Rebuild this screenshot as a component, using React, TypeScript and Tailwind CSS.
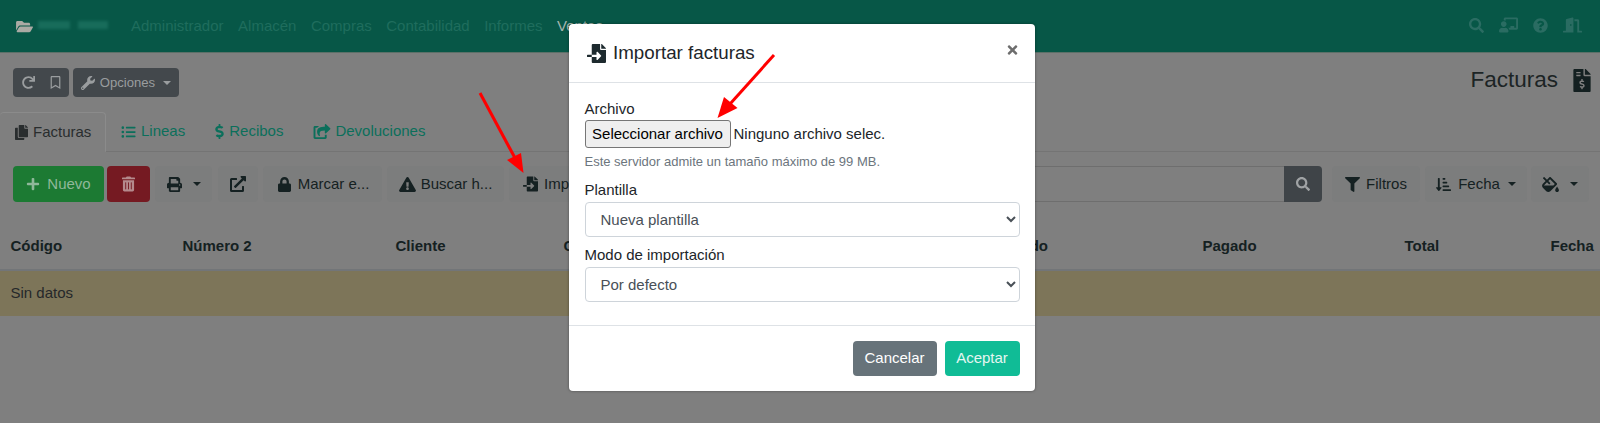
import {
  FaChalkboardTeacher,
  FaCopy,
  FaDollarSign,
  FaDoorOpen,
  FaExclamationTriangle,
  FaExternalLinkAlt,
  FaFileImport,
  FaFileInvoiceDollar,
  FaFillDrip,
  FaFilter,
  FaFolderOpen,
  FaListUl,
  FaLock,
  FaPlus,
  FaPrint,
  FaQuestionCircle,
  FaRedo,
  FaRegBookmark,
  FaSearch,
  FaShareSquare,
  FaSortAmountDownAlt,
  FaTimes,
  FaTrashAlt,
  FaWrench,
} from "react-icons/fa";

const Caret = () => (
  <span className="inline-block border-x-[4px] border-t-[4px] border-x-transparent border-t-current" />
);

const App = () => {
  const navLinks = ["Administrador", "Almacén", "Compras", "Contabilidad", "Informes"];
  const columns = ["Código", "Número 2", "Cliente", "Cif/NIF", "Vencido", "Pagado", "Total", "Fecha"];

  return (
    <div className="relative h-[423px] w-[1600px] overflow-hidden bg-[#7f7f7f] font-['Liberation_Sans',sans-serif] text-[15px] text-[#1f2728]">
      {/* Navbar */}
      <nav className="flex h-[53px] items-center border-b border-[#5c7068] bg-[#075747] pl-[14px] pr-[18px]">
        <FaFolderOpen className="h-[15px] w-[21px] shrink-0 text-[#aaaaa4]" />
        <div className="ml-[3px] flex w-[93px] gap-[8px] pb-[2px] opacity-30 blur-[1.5px]">
          <span className="h-[8px] w-[32px] bg-[#3f9c88]" />
          <span className="h-[8px] w-[30px] bg-[#3f9c88]" />
        </div>
        <div className="flex gap-[14.5px] text-[#1f6d5d]">
          {navLinks.map((link) => (
            <span key={link}>{link}</span>
          ))}
          <span className="text-[#a3b5ae]">Ventas</span>
        </div>
        <div className="ml-auto flex items-center gap-[15px] pb-[2px] text-[#2a6c62]">
          <FaSearch className="h-[15px] w-[15px]" />
          <FaChalkboardTeacher className="h-[16px] w-[19px]" />
          <FaQuestionCircle className="h-[15px] w-[15px]" />
          <FaDoorOpen className="h-[16px] w-[19px]" />
        </div>
      </nav>

      {/* Page actions and title */}
      <div className="mt-[15px] flex h-[29px] items-center pl-[13px] pr-[9px]">
        <div className="flex h-[29px] w-[56px] items-center justify-center gap-[15px] rounded-[4px] bg-[#43484c] text-[#9a9d9f]">
          <FaRedo className="h-[13px] w-[13px]" />
          <FaRegBookmark className="h-[13px] w-[11px]" />
        </div>
        <div className="ml-[4px] flex h-[29px] w-[106px] items-center justify-center gap-[5px] rounded-[4px] bg-[#43484c] text-[13.125px] text-[#9a9d9f]">
          <FaWrench className="h-[14px] w-[14px]" />
          <span className="mr-[3px]">Opciones</span>
          <Caret />
        </div>
        <div className="ml-auto flex items-center gap-[15px] pb-[5px]">
          <span className="text-[22.5px] text-[#1c2425]">Facturas</span>
          <FaFileInvoiceDollar className="h-[23px] w-[18px] text-[#142021]" />
        </div>
      </div>

      {/* Tabs */}
      <div className="mt-[15px] flex h-[40px] border-b border-[#747474] text-[#0b6f5b]">
        <div className="-mb-px flex w-[106px] items-center gap-[5px] rounded-t-[4px] border border-b-[#7f7f7f] border-l-0 border-[#8b8b8b] pl-[15px] text-[#292d2e]">
          <FaCopy className="h-[15px] w-[13px]" />
          <span>Facturas</span>
        </div>
        <div className="ml-[15px] flex items-center gap-[5px]">
          <FaListUl className="h-[14px] w-[15px]" />
          <span>Lineas</span>
        </div>
        <div className="ml-[30px] flex items-center gap-[5px]">
          <FaDollarSign className="h-[15px] w-[9px]" />
          <span>Recibos</span>
        </div>
        <div className="ml-[30px] flex items-center gap-[4px]">
          <FaShareSquare className="h-[15px] w-[18px]" />
          <span>Devoluciones</span>
        </div>
      </div>

      {/* Toolbar */}
      <div className="mt-[14px] flex h-[36px] items-stretch pl-[13px]">
        <div className="flex w-[91px] items-center justify-center gap-[7px] rounded-[4px] bg-[#1c7a33] text-[#8fb89a]">
          <FaPlus className="h-[14px] w-[14px]" />
          <span>Nuevo</span>
        </div>
        <div className="ml-[3px] flex w-[43px] items-center justify-center rounded-[4px] bg-[#751a22] text-[#b58a8d]">
          <FaTrashAlt className="h-[16px] w-[13px]" />
        </div>
        <div className="ml-[5px] flex w-[57px] items-center justify-center gap-[11px] rounded-[4px] bg-[#7c7d7d] text-[#152122]">
          <FaPrint className="h-[15px] w-[15px]" />
          <Caret />
        </div>
        <div className="ml-[6px] flex w-[40px] items-center justify-center rounded-[4px] bg-[#7c7d7d] text-[#152122]">
          <FaExternalLinkAlt className="h-[16px] w-[16px]" />
        </div>
        <div className="ml-[5px] flex w-[119px] items-center justify-center gap-[7px] rounded-[4px] bg-[#7c7d7d] pl-[2px] text-[#152122]">
          <FaLock className="h-[15px] w-[13px]" />
          <span>Marcar e...</span>
        </div>
        <div className="ml-[5px] flex w-[117px] items-center justify-center gap-[5px] rounded-[4px] bg-[#7c7d7d] text-[#152122]">
          <FaExclamationTriangle className="h-[15px] w-[17px]" />
          <span>Buscar h...</span>
        </div>
        <div className="ml-[5px] flex w-[100px] items-center justify-start gap-[6px] rounded-[4px] bg-[#7c7d7d] pl-[14px] text-[#152122]">
          <FaFileImport className="h-[16px] w-[15px]" />
          <span>Importar</span>
        </div>
        <div className="ml-[5px] flex flex-1 items-stretch">
          <div className="flex-1 border-y border-[#6e6e6e]" />
          <div className="flex w-[38px] items-center justify-center rounded-r-[4px] bg-[#3f4448] text-[#a0a3a5]">
            <FaSearch className="h-[14px] w-[14px]" />
          </div>
        </div>
        <div className="ml-[10px] flex w-[88px] items-center justify-center gap-[6px] rounded-[4px] bg-[#7c7d7d] text-[#152122]">
          <FaFilter className="h-[15px] w-[15px]" />
          <span>Filtros</span>
        </div>
        <div className="ml-[5px] flex w-[102px] items-center justify-center gap-[7px] rounded-[4px] bg-[#7c7d7d] text-[#152122]">
          <FaSortAmountDownAlt className="h-[15px] w-[15px]" />
          <span className="mr-[1px]">Fecha</span>
          <Caret />
        </div>
        <div className="ml-[4px] mr-[11px] flex w-[58px] items-center justify-center gap-[11px] rounded-[4px] bg-[#7c7d7d] text-[#152122]">
          <FaFillDrip className="h-[15px] w-[17px]" />
          <Caret />
        </div>
      </div>

      {/* Table */}
      <div className="grid h-[69px] grid-cols-[172px_213px_168px_427px_212px_202px_146px_1fr] items-center border-b-2 border-[#727578] pl-[10.5px] pt-[22px] font-bold text-[#152122]">
        {columns.map((column) => (
          <span key={column}>{column}</span>
        ))}
      </div>
      <div className="flex h-[45px] items-center bg-[#7d7559] pl-[10.5px] text-[#25282a]">Sin datos</div>

      {/* Modal */}
      <div className="absolute left-[569px] top-[24px] flex h-[367px] w-[466px] flex-col rounded-[4px] bg-white text-[#212529] shadow-[0_0_3px_rgba(0,0,0,0.4)]">
        <div className="flex h-[59px] items-center border-b border-[#dee2e6] pl-[18px] pr-[17px]">
          <FaFileImport className="h-[19px] w-[19px] text-[#1d2a2e]" />
          <span className="ml-[7px] text-[18.75px]">Importar facturas</span>
          <FaTimes className="mb-[6px] ml-auto h-[14px] w-[11px] text-[#6d6d6d]" />
        </div>
        <div className="flex-1 px-[15.5px] pt-[15px]">
          <div className="h-[22px] leading-[22px]">Archivo</div>
          <div className="flex h-[28px] items-center">
            <button className="h-[28px] w-[146px] whitespace-nowrap rounded-[3px] border border-[#767676] bg-[#efefef] text-[15px] text-black">
              Seleccionar archivo
            </button>
            <span className="ml-[3px]">Ninguno archivo selec.</span>
          </div>
          <div className="mt-[5px] text-[13px] leading-[18px] text-[#6c757d]">
            Este servidor admite un tamaño máximo de 99 MB.
          </div>
          <div className="mt-[8px] h-[22px] leading-[22px]">Plantilla</div>
          <select className="mt-[1px] block h-[35px] w-full rounded-[4px] border border-[#ced4da] bg-white pl-[11px] text-[15px] text-[#495057]">
            <option>Nueva plantilla</option>
          </select>
          <div className="mt-[7px] h-[22px] leading-[22px]">Modo de importación</div>
          <select className="mt-[1px] block h-[35px] w-full rounded-[4px] border border-[#ced4da] bg-white pl-[11px] text-[15px] text-[#495057]">
            <option>Por defecto</option>
          </select>
        </div>
        <div className="flex h-[66px] items-start justify-end gap-[8px] border-t border-[#dee2e6] pr-[15.5px] pt-[14.5px]">
          <button className="h-[35px] w-[84px] rounded-[4px] bg-[#67737a] text-[15px] text-white">Cancelar</button>
          <button className="h-[35px] w-[75px] rounded-[4px] bg-[#10bc96] text-[15px] text-[#e4f6f1]">Aceptar</button>
        </div>
      </div>

      {/* Red annotation arrows */}
      <svg className="pointer-events-none absolute left-0 top-0" width="1600" height="423" viewBox="0 0 1600 423">
        <line x1="480" y1="93" x2="515" y2="158" stroke="#ff0000" strokeWidth="3" />
        <polygon points="523.5,173 507,160 521,153" fill="#ff0000" />
        <line x1="774" y1="55" x2="730" y2="104" stroke="#ff0000" strokeWidth="3" />
        <polygon points="717.5,118 724,97 737.5,108" fill="#ff0000" />
      </svg>
    </div>
  );
};

export default App;
